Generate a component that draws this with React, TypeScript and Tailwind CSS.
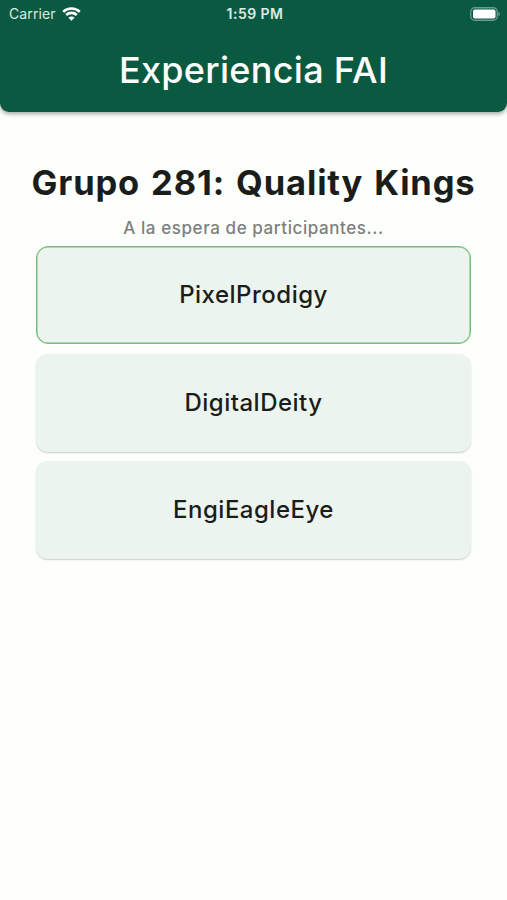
const players = [
  { name: "PixelProdigy", ready: true },
  { name: "DigitalDeity", ready: false },
  { name: "EngiEagleEye", ready: false },
];

const StatusBar = () => (
  <div className="grid grid-cols-3 items-center h-7 pl-[9px] pr-[6px] text-[14px] leading-none">
    <div className="flex items-center gap-[6px]">
      <span className="tracking-[0.1px] text-[#dcebe4]">Carrier</span>
      <svg width="19" height="14" viewBox="0 0 19 14" fill="none" stroke="currentColor" strokeWidth="2.6">
        <path d="M1.2 4.9C5.8 0.4 13.2 0.4 17.8 4.9" />
        <path d="M4.2 8C7.1 5.2 11.9 5.2 14.8 8" />
        <path d="M6.4 10.7C8 9.1 11 9.1 12.6 10.7L9.5 13.8Z" fill="currentColor" stroke="none" />
      </svg>
    </div>
    <div className="text-center font-semibold whitespace-nowrap tracking-[0.45px] text-[#dcebe4]">
      1:59 PM
    </div>
    <div className="flex justify-end">
      <svg width="31" height="14" viewBox="0 0 31 14" fill="none">
        <rect x="0.75" y="0.75" width="26.5" height="12.5" rx="4" stroke="currentColor" strokeWidth="1.3" strokeOpacity="0.4" />
        <rect x="3" y="2.5" width="22.5" height="9" rx="1.8" fill="currentColor" />
        <path d="M28.5 5V9C30.3 8.5 30.3 5.5 28.5 5Z" fill="currentColor" fillOpacity="0.45" />
      </svg>
    </div>
  </div>
);

const App = () => {
  return (
    <div className="min-h-screen bg-[#fcfffc] text-[#1b1d1b] font-['Inter','Roboto',sans-serif]">
      <header className="h-28 bg-[#0a5a42] text-white rounded-b-[9px] shadow-[0_2px_4px_rgba(0,0,0,0.35)]">
        <StatusBar />
        <h1 className="pt-[19px] text-center text-[36px] leading-[46px] font-medium tracking-[0.3px]">
          Experiencia FAI
        </h1>
      </header>

      <main className="pt-[48px]">
        <h2 className="text-center text-[34.5px] leading-[46px] font-[650] tracking-[0.85px] [word-spacing:2px] whitespace-nowrap">
          Grupo 281: Quality Kings
        </h2>
        <p className="mt-[11px] text-center text-[17px] leading-[23px] font-medium text-[#7d807d] tracking-[0.58px]">
          A la espera de participantes...
        </p>
        <div className="mt-[6px] px-9 flex flex-col gap-[9.5px]">
          {players.map((player) => (
            <div
              key={player.name}
              className={`h-[98px] flex items-center justify-center rounded-[12px] bg-[#ecf4ef] text-[24px] font-medium tracking-[0.5px] ${
                player.ready
                  ? "border-[1.5px] border-[#77bd7a] shadow-[inset_0_0_0_0.5px_#77bd7a]"
                  : "shadow-[0_1px_1.5px_rgba(0,0,0,0.2)]"
              }`}
            >
              {player.name}
            </div>
          ))}
        </div>
      </main>
    </div>
  );
};

export default App;
